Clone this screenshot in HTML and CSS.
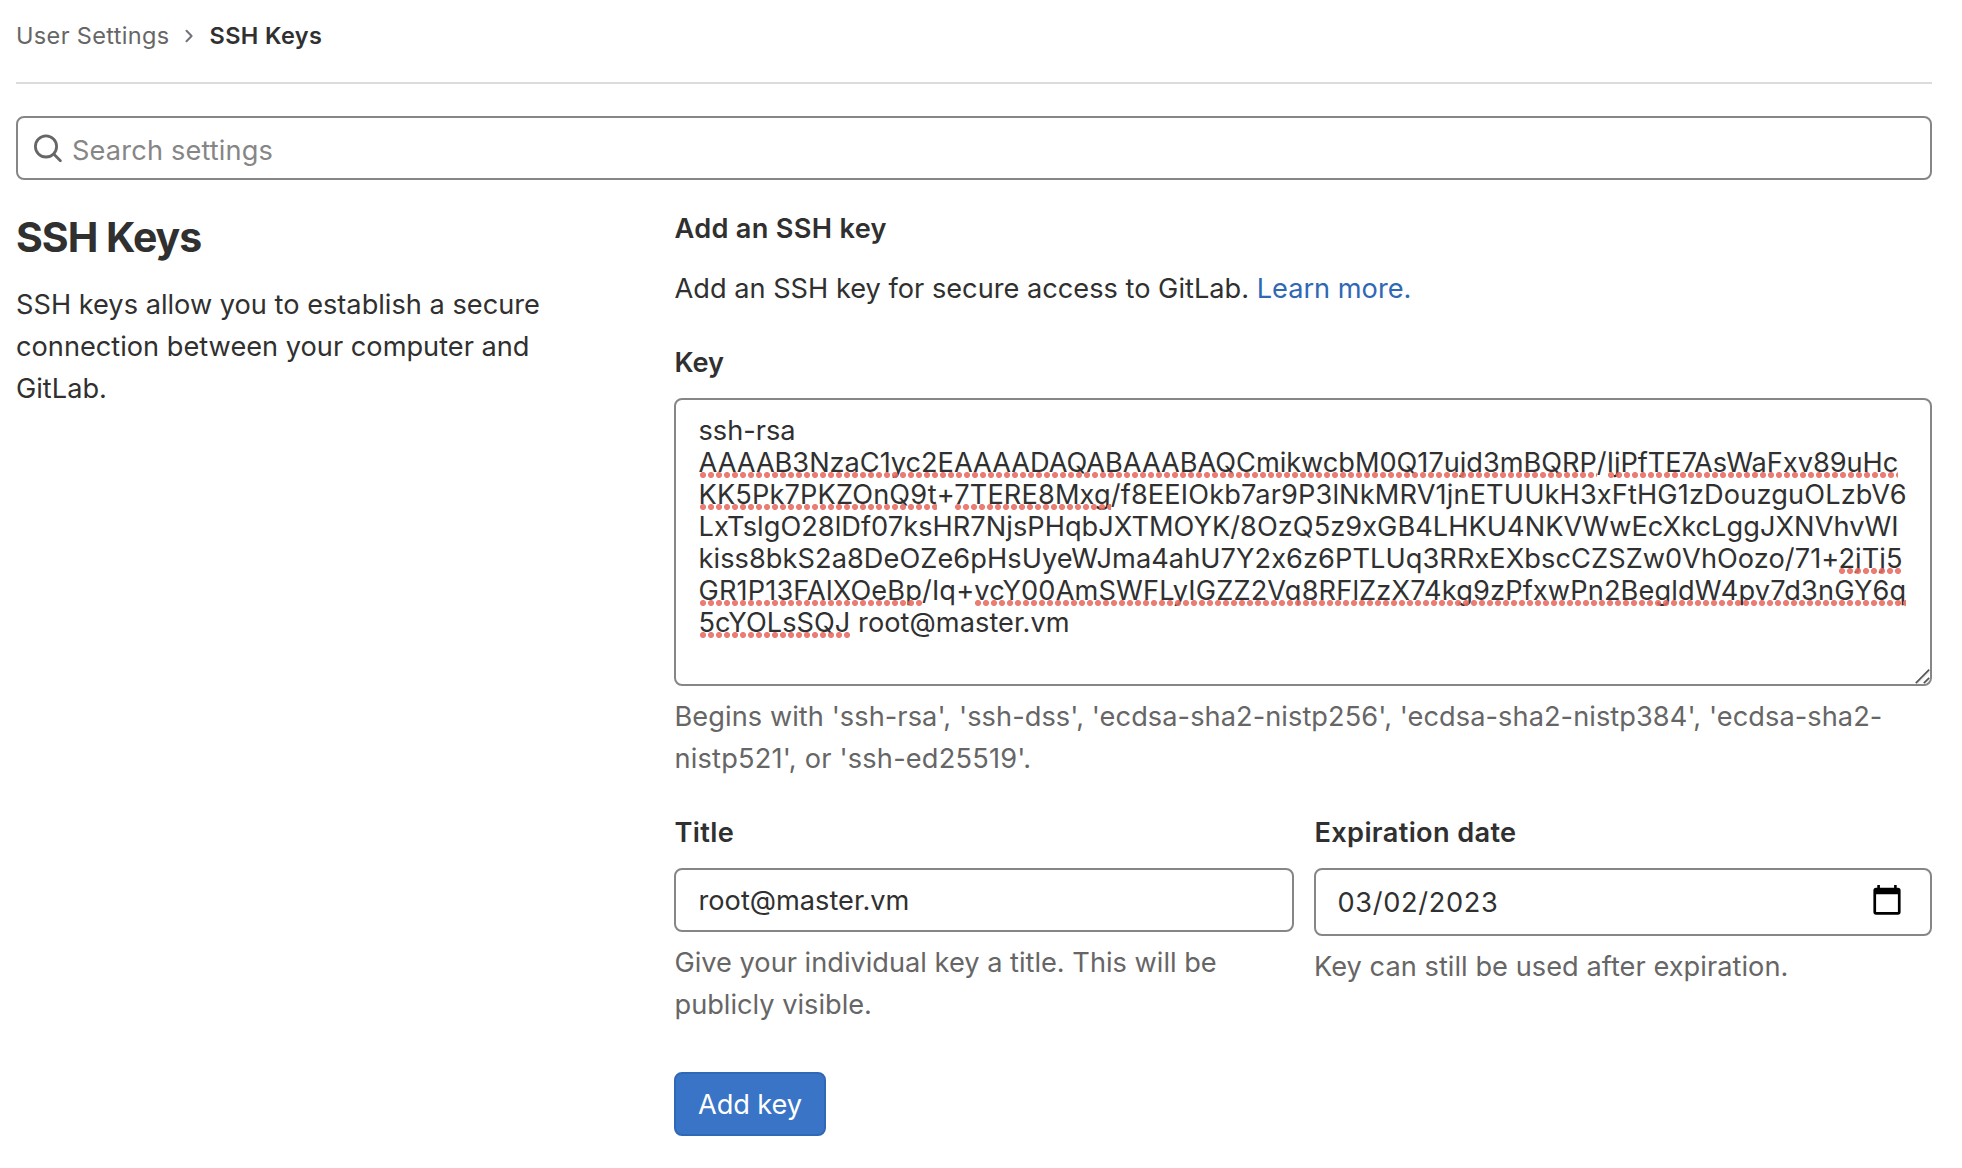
FILE: index.html
```
<!DOCTYPE html>
<html lang="en">
<head>
<meta charset="utf-8">
<title>SSH Keys · User Settings · GitLab</title>
<link rel="stylesheet" href="styles.css">
</head>
<body>
<nav class="breadcrumbs">
  <a class="crumb">User Settings</a>
  <svg class="chevron" width="10" height="16" viewBox="0 0 10 16"><path d="M2.5 2.8 7.6 8 2.5 13.2" fill="none" stroke="#737278" stroke-width="2" stroke-linecap="round" stroke-linejoin="round"/></svg>
  <a class="crumb crumb-current">SSH Keys</a>
</nav>

<div class="search">
  <svg class="search-icon" width="32" height="32" viewBox="0 0 32 32"><g fill="none" stroke="#666" stroke-width="2.8"><circle cx="14" cy="14.4" r="10.6"/><path d="M21.7 22.1 28.4 28.8" stroke-linecap="round"/></g></svg>
  <span class="placeholder">Search settings</span>
</div>

<main class="settings">
  <section class="intro">
    <h1>SSH Keys</h1>
    <p>SSH keys allow you to establish a secure connection between your computer and GitLab.</p>
  </section>

  <section class="form">
    <h2>Add an SSH key</h2>
    <p class="lead">Add an SSH key for secure access to GitLab. <a class="link">Learn more.</a></p>

    <div class="label">Key</div>
    <div class="control textarea">
      <div>ssh-rsa</div>
      <div class="k1"><span class="misspelled">AAAAB3NzaC1yc2EAAAADAQABAAABAQCmikwcbM0Q17ujd3mBQRP</span>/<span class="misspelled">IjPfTE7AsWaFxv89uHc</span></div>
      <div class="k2"><span class="misspelled">KK5Pk7PKZOnQ9t</span>+<span class="misspelled">7TERE8Mxg</span>/f8EEIOkb7ar9P3lNkMRV1jnETUUkH3xFtHG1zDouzguOLzbV6</div>
      <div class="k3">LxTslgO28lDf07ksHR7NjsPHqbJXTMOYK/8OzQ5z9xGB4LHKU4NKVWwEcXkcLggJXNVhvWI</div>
      <div class="k4">kiss8bkS2a8DeOZe6pHsUyeWJma4ahU7Y2x6z6PTLUq3RRxEXbscCZSZw0VhOozo/71+<span class="misspelled">2jTj5</span></div>
      <div class="k2"><span class="misspelled">GR1P13FAlXOeBp</span>/Iq+<span class="misspelled">vcY00AmSWFLyIGZZ2Vq8RFlZzX74kg9zPfxwPn2BegldW4pv7d3nGY6q</span></div>
      <div class="k3"><span class="misspelled">5cYOLsSQJ</span> root@master.vm</div>
      <svg class="grip" width="16" height="16" viewBox="0 0 16 16"><path d="M1.8 15.2 15.2 1.6M9.8 15.2 15.2 9.8" fill="none" stroke="#555" stroke-width="1.7"/><path d="M3.4 16 16 3.4M11.4 16 16 11.4" fill="none" stroke="#ddd" stroke-width="1"/></svg>
    </div>
    <p class="help help-key">Begins with 'ssh-rsa', 'ssh-dss', 'ecdsa-sha2-nistp256', 'ecdsa-sha2-nistp384', 'ecdsa-sha2-<br><span class="help-tail">nistp521', or 'ssh-ed25519'.</span></p>

    <div class="fields">
      <div class="field">
        <div class="label label-wide">Title</div>
        <div class="control input">root@master.vm</div>
        <p class="help">Give your individual key a title. This will be publicly visible.</p>
      </div>
      <div class="field">
        <div class="label label-wide">Expiration date</div>
        <div class="control input input-date">
          <span class="date">03/02/2023</span>
          <svg width="28" height="30" viewBox="0 0 28 30"><path fill="#000" fill-rule="evenodd" d="M4.3 0h2.6v2.8h14.2V0h2.6v2.8h1.2a2.7 2.7 0 0 1 2.7 2.7V27a2.7 2.7 0 0 1-2.7 2.7H3.1A2.7 2.7 0 0 1 .4 27V5.5a2.7 2.7 0 0 1 2.7-2.7h1.2zM3.1 9.2V27h21.8V9.2z"/></svg>
        </div>
        <p class="help help-date">Key can still be used after expiration.</p>
      </div>
    </div>

    <button class="button">Add key</button>
  </section>
</main>
</body>
</html>
```
FILE: styles.css
```
* {
  box-sizing: border-box;
}

body {
  margin: 0;
  padding: 0 30px 0 16px;
  background: #fff;
  color: #303030;
  font: 400 27.2px/42px Inter, "Liberation Sans", sans-serif;
}

h1, h2, p {
  margin: 0;
}

.breadcrumbs {
  display: flex;
  align-items: center;
  height: 84px;
  padding-bottom: 10px;
  border-bottom: 2px solid #dbdbdb;
  font-size: 23.5px;
  line-height: 36px;
}

.crumb {
  color: #666;
  letter-spacing: 0.35px;
}

.chevron {
  margin: 0 16px 0 14px;
}

.crumb-current {
  color: #303030;
  font-weight: 600;
}

.search,
.control {
  border: 2px solid #868686;
  border-radius: 8px;
  background: #fff;
}

.search {
  display: flex;
  align-items: center;
  gap: 8px;
  height: 64px;
  margin-top: 32px;
  padding-left: 14px;
}

.search-icon {
  margin-bottom: 1px;
}

.placeholder {
  padding-top: 6px;
  color: #868686;
  line-height: 32px;
  letter-spacing: 0.15px;
}

.settings {
  display: grid;
  grid-template-columns: 540px 1258px;
  justify-content: space-between;
}

.intro {
  padding-top: 32px;
}

h1 {
  margin-bottom: 22px;
  font-size: 41px;
  font-weight: 650;
  line-height: 50px;
  letter-spacing: -1px;
}

.form {
  padding-top: 28px;
}

h2 {
  font-size: 27.2px;
  font-weight: 600;
  line-height: 42px;
  letter-spacing: 0.3px;
}

h2,
.lead,
.label,
.help {
  padding-left: 0.5px;
}

.lead {
  margin: 18px 0 32px;
}

.link {
  color: #2f68b4;
}

.label {
  margin-bottom: 14px;
  font-weight: 600;
}

.label-wide {
  letter-spacing: 0.34px;
}

.textarea {
  position: relative;
  height: 288px;
  padding: 15px 22px 13px 22.5px;
  line-height: 32px;
  white-space: nowrap;
}

.k1 { letter-spacing: -0.03px; }
.k2 { letter-spacing: 0.13px; }
.k3 { letter-spacing: 0.04px; }
.k4 { letter-spacing: 0.06px; }

.misspelled {
  position: relative;
}

/* Spell-check dots under a word */
.misspelled::after {
  content: "";
  position: absolute;
  left: 0;
  right: 0;
  bottom: 1px;
  height: 6px;
  background: radial-gradient(circle at 4px 3px, rgba(232, 106, 96, 0.88) 2.7px, transparent 3.3px) 0 0 / 8px 6px repeat-x;
}

.grip {
  position: absolute;
  right: 0;
  bottom: 0;
}

.help {
  margin-top: 10px;
  color: #666;
}

.help-key {
  letter-spacing: 0.06px;
  white-space: nowrap;
}

.help-tail {
  letter-spacing: 0.19px;
}

.help-date {
  padding-left: 0;
  letter-spacing: 0.04px;
}

.fields {
  display: grid;
  grid-template-columns: 620px 618px;
  gap: 20px;
  margin-top: 32px;
}

.input {
  height: 64px;
  padding: 15px 22px 13px 22.5px;
  line-height: 32px;
}

.input-date {
  display: flex;
  align-items: center;
  justify-content: space-between;
  height: 68px;
  padding: 0 29px 0 21.5px;
}

.input-date svg {
  margin-bottom: 4px;
}

.date {
  padding-top: 2px;
  letter-spacing: 0.66px;
}

.button {
  display: block;
  width: 152px;
  height: 64px;
  margin-top: 46px;
  padding: 2px 0 0;
  border: 2px solid #2f68b4;
  border-radius: 8px;
  background: #3a74c6;
  color: #fff;
  font: inherit;
  line-height: 32px;
  letter-spacing: -0.1px;
}
```
